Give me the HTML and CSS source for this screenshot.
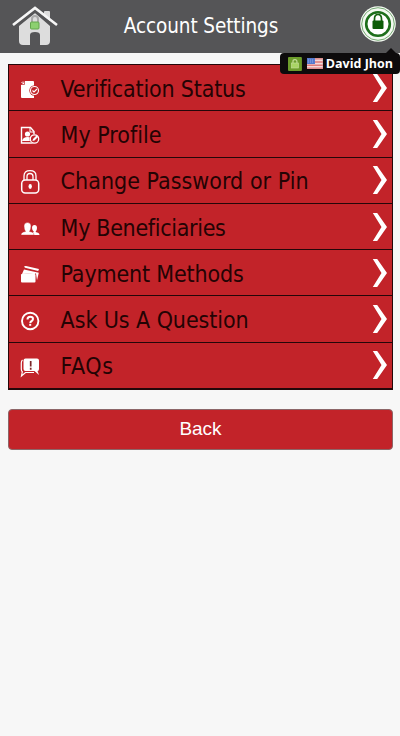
FILE: index.html
```html
<!DOCTYPE html>
<html lang="en">
<head>
    <meta charset="UTF-8">
    <meta name="viewport" content="width=device-width, initial-scale=1.0">
    <title>Account Settings</title>
    <link rel="stylesheet" href="styles.css">
</head>
<body>
    <header class="header">
        <a href="#" class="home">
            <svg width="46" height="40" viewBox="0 0 46 40">
                <path d="M7 20L23 7l15 13v15q0 4-4 4h-6V29q0-3-5-3t-5 3v10h-7q-4 0-4-4z" fill="#ddd"/>
                <path d="M2 19L23 3l21 16" fill="none" stroke="#555557" stroke-width="6"/>
                <path d="M32 6q0-1 1-1h4q1 0 1 1v9l-6-5z" fill="#ddd"/>
                <path d="M1 19L23 2l22 17" fill="none" stroke="#f6f6f6" stroke-width="2.6"/>
                <path d="M20 17v-4q0-3 3-3t3 3v4" fill="none" stroke="#aaa" stroke-width="2"/>
                <rect x="18.500" y="16" width="8.500" height="7" rx="1" fill="#8cd070" stroke="#62a64c"/>
            </svg>
        </a>
        <h1>Account Settings</h1>
        <a href="#" class="account">
            <svg width="36" height="36" viewBox="0 0 36 36">
                <circle cx="18" cy="18" r="17.800" fill="#f4faf2"/>
                <circle cx="18" cy="18" r="16.300" fill="none" stroke="#75a873" stroke-width="1"/>
                <circle cx="18" cy="18" r="11.800" fill="#fff" stroke="#1d6f1b" stroke-width="2.600"/>
                <path d="M14.500 16v-3q0-4.500 3.500-4.500t3.500 4.500v3" fill="none" stroke="#15620f" stroke-width="1.700"/>
                <rect x="12.500" y="14.500" width="11" height="8.500" rx="1" fill="#0d5c08"/>
            </svg>
        </a>
        <div class="user-tag">
            <svg width="14" height="14" viewBox="0 0 14 14">
                <rect width="14" height="14" rx="1" fill="#6d9d2c"/>
                <path d="M5 6V4.500q0-2 2-2t2 2V6" fill="none" stroke="#c3dc98" stroke-width="1.200"/>
                <rect x="3.500" y="6" width="7" height="5" fill="#a9d565" stroke="#c3dc98" stroke-width=".7"/>
            </svg>
            <svg width="16" height="11" viewBox="0 0 16 11">
                <rect width="16" height="11" fill="#f3dada"/>
                <path d="M0 .8h16M0 4h16M0 7.200h16M0 10.200h16" stroke="#dc7b7b" stroke-width="1.400"/>
                <rect width="8" height="6" fill="#5279cf"/>
                <path d="M1 2h6M1 4h6" stroke="#a9bfee" stroke-width=".8" stroke-dasharray="1 1"/>
            </svg>
            <span>David Jhon</span>
        </div>
    </header>

    <ul class="menu">
        <li>
            <svg class="icon" viewBox="0 0 20 24">
                <path d="M5 3h8q1 0 1 1v16H2q-1 0-1-1V7z" fill="#fff"/>
                <path d="M1 6.500h3.500V3" fill="none" stroke="#c22329" stroke-width=".7"/>
                <path d="M1.500 5L3 3.500" stroke="#fff"/>
                <circle cx="14.500" cy="12.500" r="5.200" fill="#c22329"/>
                <circle cx="14.500" cy="12.500" r="4" fill="none" stroke="#fff" stroke-width="1.100"/>
                <path d="M12.500 12.500l1.500 1.500 3-3" fill="none" stroke="#fff" stroke-width="1.200"/>
            </svg>
            <span style="width:185px">Verification Status</span>
            <svg class="arrow" viewBox="0 0 16 28"><path d="M.8 0h4.400L15 14 5.200 28H.8L9.500 14z"/></svg>
        </li>
        <li>
            <svg class="icon" viewBox="0 0 20 24">
                <path d="M1.500 3.500h9l3.500 4V19H1.500z" fill="none" stroke="#fff" stroke-width="1.400"/>
                <path d="M10 3.500V8h4" fill="none" stroke="#fff"/>
                <circle cx="7.500" cy="10" r="2.600" fill="#fff"/>
                <path d="M2 17q1-4 5.500-4t4.500 4z" fill="#fff"/>
                <circle cx="14.500" cy="15" r="5" fill="#c22329"/>
                <circle cx="14.500" cy="15" r="4.200" fill="none" stroke="#fff" stroke-width="1.300"/>
                <path d="M12.500 17l.5-2 3.500-3.500 1.500 1.500-3.500 3.500z" fill="#fff"/>
            </svg>
            <span style="width:101px">My Profile</span>
            <svg class="arrow" viewBox="0 0 16 28"><path d="M.8 0h4.400L15 14 5.200 28H.8L9.500 14z"/></svg>
        </li>
        <li>
            <svg class="icon" viewBox="0 0 20 24">
                <rect x="1.700" y="10" width="17" height="13" rx="3.500" fill="none" stroke="#fff" stroke-width="1.500"/>
                <path d="M4 10V6q0-5.300 6-5.300T16 6v4M7 10V6.500q0-3 3-3t3 3V10" fill="none" stroke="#fff" stroke-width="1.300"/>
                <ellipse cx="10.200" cy="16.500" rx="1.700" ry="2.400" fill="#fff"/>
            </svg>
            <span style="width:248px">Change Password or Pin</span>
            <svg class="arrow" viewBox="0 0 16 28"><path d="M.8 0h4.400L15 14 5.200 28H.8L9.500 14z"/></svg>
        </li>
        <li>
            <svg class="icon" viewBox="0 0 20 24">
                <path d="M11 18q1-3 3-3-2-1.500-2-4 0-3 2.500-3T17 11q0 2.500-1.500 4 4 .5 4 3z" fill="#fff"/>
                <path d="M1 18q0-3 4.500-3.500Q4 12.500 4 9q0-3.500 3.500-3.500T11 9q0 3.500-1.500 5.500Q14 15 14 18z" fill="#fff" stroke="#c22329" stroke-width=".4"/>
            </svg>
            <span style="width:165px">My Beneficiaries</span>
            <svg class="arrow" viewBox="0 0 16 28"><path d="M.8 0h4.400L15 14 5.200 28H.8L9.500 14z"/></svg>
        </li>
        <li>
            <svg class="icon" viewBox="0 0 20 24">
                <path d="M4 3.500q1-.8 2-.5l13 3-.8 2L5 4.800z" fill="#fff"/>
                <path d="M4 6.500l14.800 3.200-1.800 7.500L16 10.500 2 11z" fill="#fff"/>
                <rect x="1" y="11" width="14.500" height="8.500" rx="1" fill="#fff"/>
                <path d="M1 12.500l14-2" stroke="#fff" stroke-width="1.500"/>
            </svg>
            <span style="width:183px">Payment Methods</span>
            <svg class="arrow" viewBox="0 0 16 28"><path d="M.8 0h4.400L15 14 5.200 28H.8L9.500 14z"/></svg>
        </li>
        <li>
            <svg class="icon" viewBox="0 0 20 24">
                <circle cx="10.200" cy="12" r="8.200" fill="none" stroke="#fff" stroke-width="1.900"/>
                <path d="M7.500 10.500q0-2.700 2.800-2.700t2.700 2.300q0 1.200-1.300 1.900-1.400.7-1.400 2" fill="none" stroke="#fff" stroke-width="2"/>
                <rect x="9.200" y="14.800" width="2" height="2" fill="#fff"/>
            </svg>
            <span style="width:188px">Ask Us A Question</span>
            <svg class="arrow" viewBox="0 0 16 28"><path d="M.8 0h4.400L15 14 5.200 28H.8L9.500 14z"/></svg>
        </li>
        <li>
            <svg class="icon" viewBox="0 0 20 24">
                <path d="M2.500 5q-1.200 1-1.200 3v6q0 2 1 2.800L1.500 21l4-3.500H14" fill="none" stroke="#fff" stroke-width="1.200"/>
                <path d="M5.500 3.500H17q2 0 2 2V14q0 2-1.500 2l1.500 4-4.500-4h-9q-2 0-2-2V5.500q0-2 2-2z" fill="#fff"/>
                <path d="M10.700 6v5.500M10.700 12.800v2" stroke="#7c2628" stroke-width="1.700"/>
            </svg>
            <span style="width:53px">FAQs</span>
            <svg class="arrow" viewBox="0 0 16 28"><path d="M.8 0h4.400L15 14 5.200 28H.8L9.500 14z"/></svg>
        </li>
    </ul>

    <button type="button" class="back">Back</button>

    <script>
        // Spread the letters so each label fills its own column width
        document.querySelectorAll(".menu span").forEach(function (label) {
            var range = document.createRange();
            range.selectNodeContents(label);
            var extra = parseFloat(label.style.width) - range.getBoundingClientRect().width;
            label.style.letterSpacing = extra / label.textContent.length + "px";
        });
    </script>
</body>
</html>
```
FILE: styles.css
```css
* {
    box-sizing: border-box;
}

body {
    margin: 0;
    min-height: 736px;
    background-color: #f7f7f7;
    font-family: "DejaVu Sans Condensed", "DejaVu Sans", Tahoma, sans-serif;
    font-stretch: condensed;
}

.header {
    display: grid;
    grid-template-columns: 46px 1fr 36px;
    position: relative;
    height: 53px;
    padding: 6px 4px 0 12px;
    background-color: #555557;
}

.header svg {
    display: block;
}

.header h1 {
    margin: 5px 0 0 -16px;
    color: #fff;
    font-size: 20.5px;
    font-weight: normal;
    line-height: 30px;
    letter-spacing: -0.1px;
    text-align: center;
}

.user-tag {
    position: absolute;
    top: 53px;
    right: 0;
    display: flex;
    align-items: center;
    gap: 5px;
    width: 120px;
    height: 21px;
    padding: 0 7px 0 8px;
    border-radius: 4px;
    background-color: #0d0b0c;
    color: #fff;
    font-family: "Open Sans", sans-serif;
    font-stretch: normal;
    font-size: 12.5px;
    font-weight: bold;
    white-space: nowrap;
}

.user-tag span {
    margin-left: -2px;
}

.user-tag::before {
    content: "";
    position: absolute;
    top: -5px;
    right: 3px;
    border: 6px solid transparent;
    border-top: 0;
    border-bottom-color: #0d0b0c;
}

.menu {
    margin: 11px 7px 0 8px;
    padding: 0;
    border: 1px solid #240709;
    border-bottom-width: 2px;
    background-color: #c22329;
    list-style: none;
}

.menu li {
    display: flex;
    align-items: center;
    height: 46.3px;
    padding: 0 4px 0 11px;
    border-bottom: 1px solid #240709;
}

.menu li:last-child {
    height: 45.2px;
    border-bottom: 0;
}

.icon {
    width: 20px;
    height: 24px;
    margin: 4px 20.6px 0 0;
}

.menu span {
    margin-top: 2px;
    color: #240304;
    font-size: 23px;
    line-height: 28px;
    white-space: nowrap;
}

.arrow {
    width: 16px;
    height: 28px;
    margin-left: auto;
    fill: #fff;
}

.back {
    display: block;
    width: 385px;
    height: 41px;
    margin: 19px 0 0 8px;
    border: 1px solid #8d6668;
    border-radius: 4px;
    background-color: #c22329;
    color: #fff;
    font-family: "Liberation Sans", Arial, sans-serif;
    font-size: 19px;
}
```
